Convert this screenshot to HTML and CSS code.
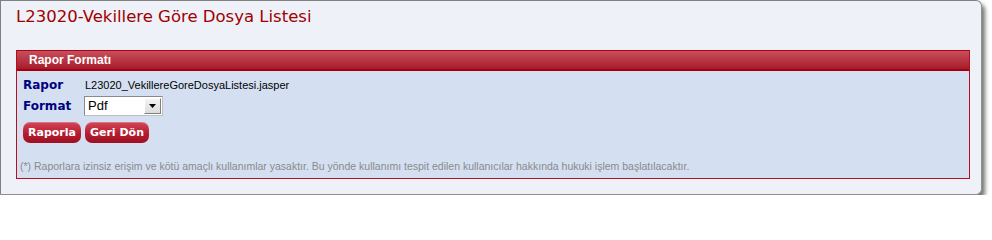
FILE: index.html
```html
<!DOCTYPE html>
<html>
<head>
<meta charset="utf-8">
<link rel="stylesheet" href="styles.css">
</head>
<body>
<div class="panel">
  <h1 class="title">L23020-Vekillere Göre Dosya Listesi</h1>
  <div class="box">
    <div class="box-head">Rapor Formatı</div>
    <div class="box-body">
      <div class="row">
        <span class="label">Rapor</span>
        <span class="value">L23020_VekillereGoreDosyaListesi.jasper</span>
      </div>
      <div class="row row-format">
        <span class="label">Format</span>
        <span class="select">
          <span class="select-text">Pdf</span>
          <span class="select-btn"><svg width="7" height="4" viewBox="0 0 7 4"><path d="M0 0H7L3.5 4Z" fill="#000"/></svg></span>
        </span>
      </div>
      <div class="buttons">
        <span class="btn">Raporla</span>
        <span class="btn">Geri Dön</span>
      </div>
      <p class="note">(*) Raporlara izinsiz erişim ve kötü amaçlı kullanımlar yasaktır. Bu yönde kullanımı tespit edilen kullanıcılar hakkında hukuki işlem başlatılacaktır.</p>
    </div>
  </div>
</div>
</body>
</html>
```

FILE: styles.css
```css
html, body {
  margin: 0;
  padding: 0;
  background: #ffffff;
}
.panel {
  width: 982px;
  height: 195px;
  box-sizing: border-box;
  background: #eef2f8;
  border: 1px solid #808080;
  border-right-color: #909090;
  border-bottom-color: #909090;
  border-radius: 0 6px 6px 0;
  box-shadow: 3px 4px 4px rgba(0,0,0,0.55);
  padding: 5px 12px 0 15px;
}
.title {
  margin: 0;
  font-family: "DejaVu Sans", Verdana, sans-serif;
  font-weight: normal;
  font-size: 16.5px;
  color: #a00000;
  height: 44px;
  line-height: 22px;
}
.box {
  width: 954px;
  box-sizing: border-box;
  border: 1px solid #b51020;
  border-top-color: #b00010;
  background: #d4e0f1;
}
.box-head {
  height: 18px;
  line-height: 18px;
  background: linear-gradient(#c6505c, #b6303e 60%, #a71a29);
  border-bottom: 2px solid #a00010;
  color: #ffffff;
  font-family: "Liberation Sans", Arial, sans-serif;
  font-weight: bold;
  font-size: 12px;
  padding-left: 12px;
}
.box-body {
  padding: 6px 0 0 6px;
  height: 107px;
  box-sizing: border-box;
}
.row {
  display: flex;
  align-items: center;
  height: 16px;
}
.row-format {
  height: 22px;
  margin-top: 2px;
}
.label {
  width: 62px;
  flex: none;
  font-family: "DejaVu Sans", Verdana, sans-serif;
  font-weight: bold;
  font-size: 12px;
  color: #000080;
}
.value {
  font-family: "Liberation Sans", Arial, sans-serif;
  font-size: 11px;
  color: #000;
}
.select {
  display: flex;
  width: 79px;
  height: 20px;
  margin-left: -1px;
  box-sizing: border-box;
  border: 1px solid;
  border-color: #8a8a8a #c0c0c0 #c0c0c0 #8a8a8a;
  background: #fff;
}
.select-text {
  flex: 1;
  font-family: "Liberation Sans", Arial, sans-serif;
  font-size: 13px;
  line-height: 18px;
  padding-left: 3px;
  color: #000;
}
.select-btn {
  width: 17px;
  margin: 1px;
  box-sizing: border-box;
  display: flex;
  align-items: center;
  justify-content: center;
  background: linear-gradient(#f4f4f4, #dcdcdc);
  border: 1px solid;
  border-color: #ffffff #808080 #808080 #ffffff;
}
.buttons {
  display: flex;
  gap: 4px;
  margin-top: 5px;
}
.btn {
  display: inline-block;
  height: 21px;
  line-height: 21px;
  padding: 0 5px;
  border-radius: 7px;
  background: linear-gradient(#d24858, #b71c30 55%, #9c1022);
  box-shadow: inset 0 1px 0 rgba(255,255,255,0.25);
  color: #ffffff;
  font-family: "DejaVu Sans", Verdana, sans-serif;
  font-weight: bold;
  font-size: 11px;
}
.note {
  margin: 17px 0 0 -3px;
  font-family: "Liberation Sans", Arial, sans-serif;
  font-size: 10.5px;
  color: #8a8a8a;
}
```
